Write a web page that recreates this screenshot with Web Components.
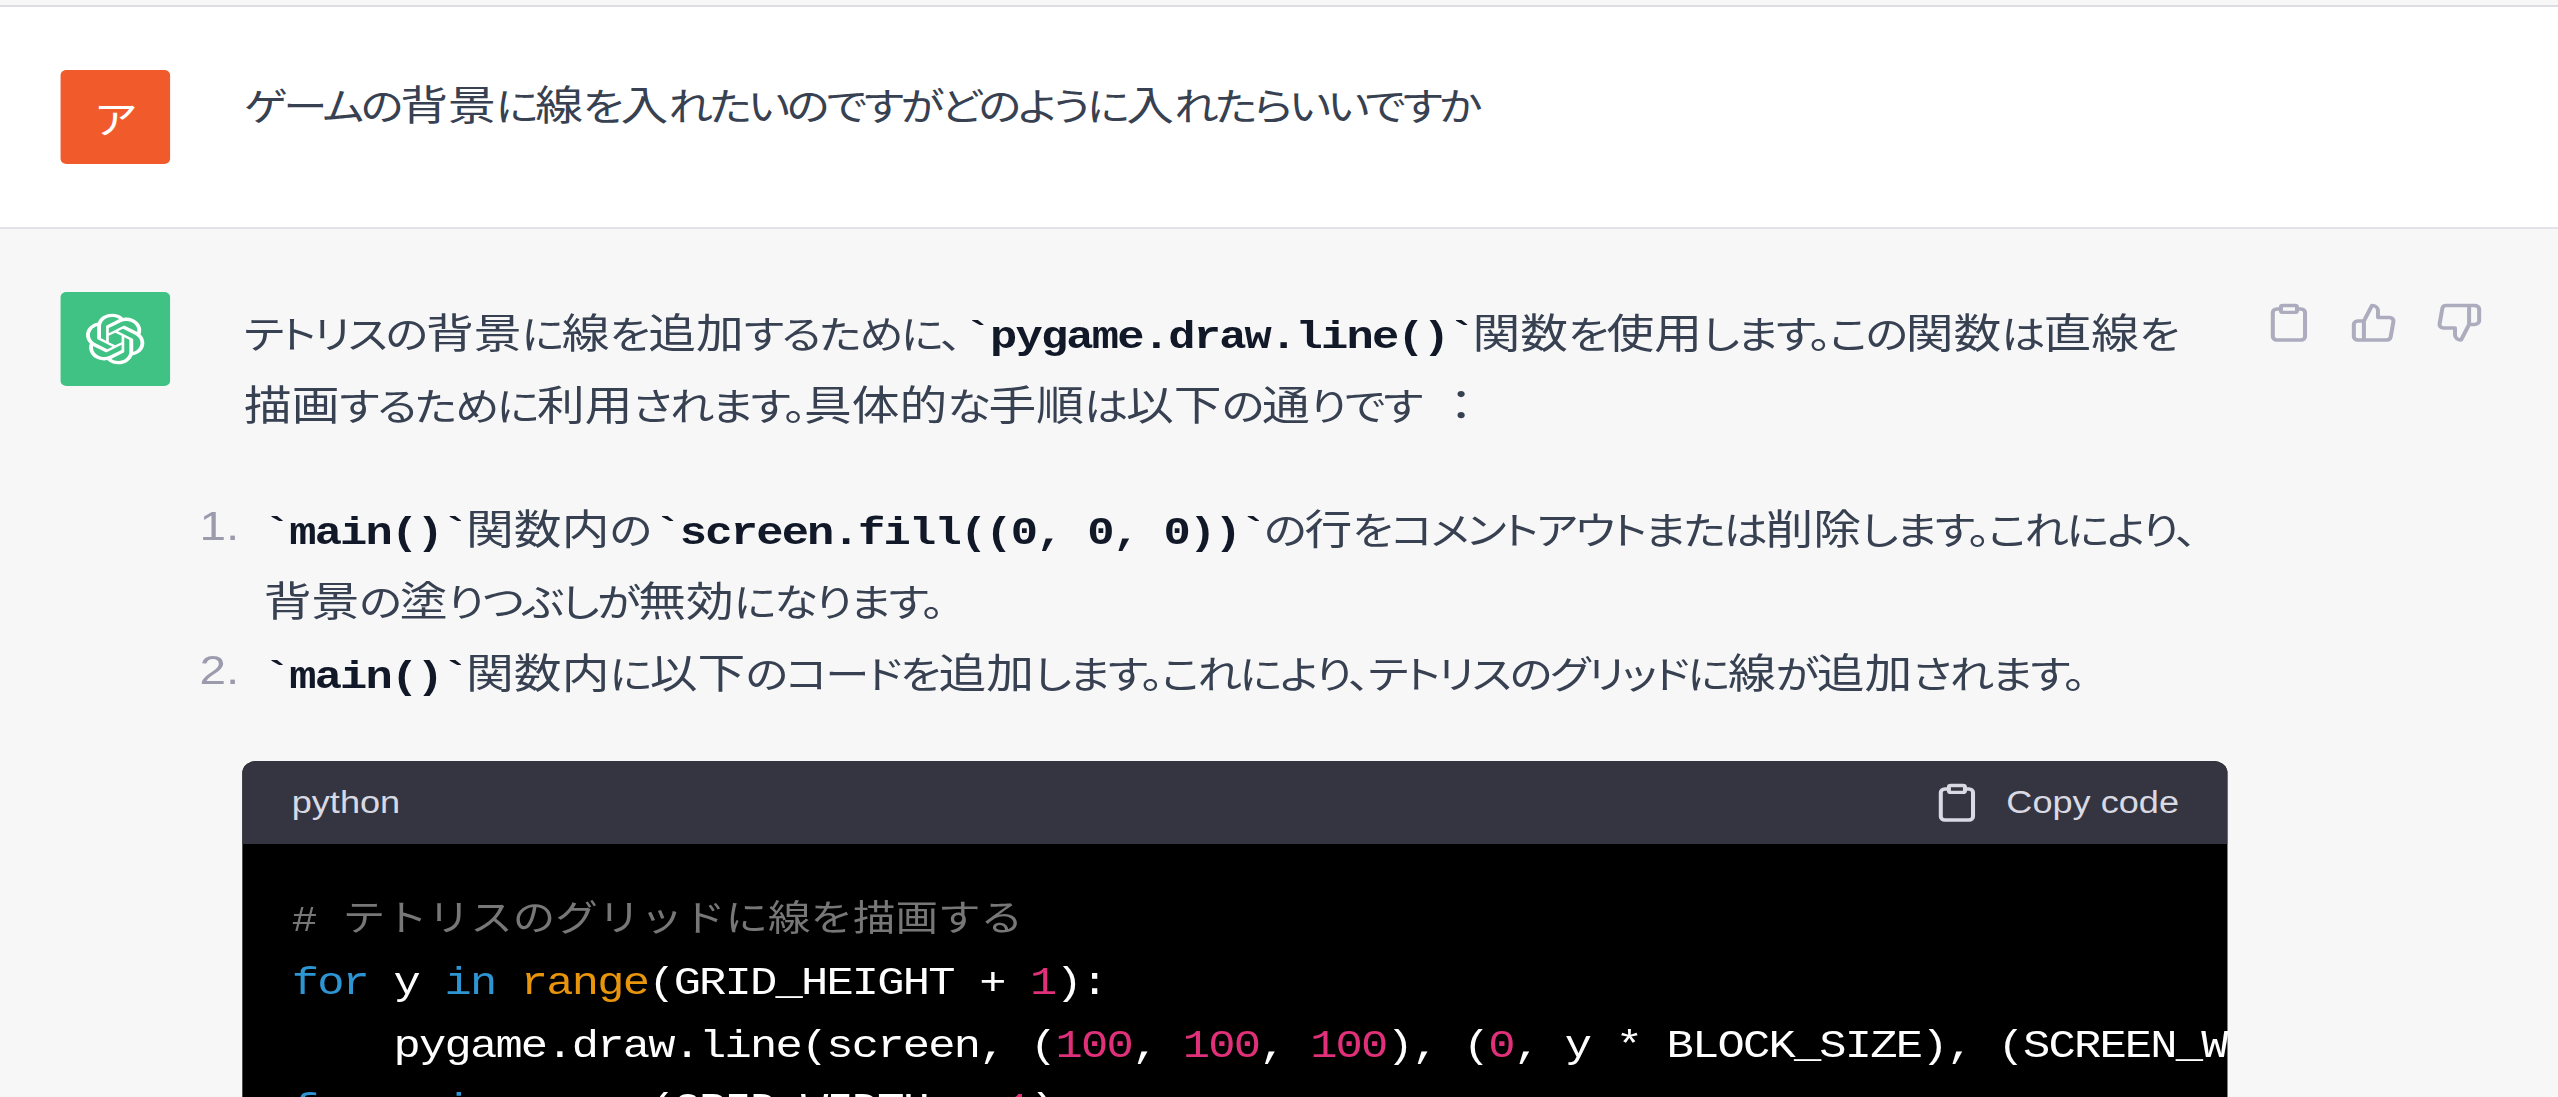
<!DOCTYPE html>
<html lang="ja">
<head>
<meta charset="utf-8">
<title>chat</title>
<style>
    html, body { margin: 0; height: 100%; overflow: hidden; background: #f7f7f8; }
    /* kana sit narrower than kanji in the shot */
    .kana { font-size: 38px; letter-spacing: -1.9px; line-height: 0; }
    chat-row[kind="user"] .kana { letter-spacing: -2.8px; }
    .full { font-feature-settings: normal; line-height: 0; padding-left: 14px; }
</style>
</head>
<body>
<chat-page>
<chat-row kind="user">
    <chat-avatar kind="user" slot="avatar">ア</chat-avatar>
    <div>ゲームの背景に線を入れたいのですがどのように入れたらいいですか</div>
</chat-row>
<chat-row kind="bot">
    <chat-avatar kind="bot" slot="avatar"></chat-avatar>
    <chat-actions slot="actions"></chat-actions>
    <chat-para>テトリスの背景に線を追加するために、<chat-code>`pygame.draw.line()`</chat-code>関数を使用します。この関数は直線を<br>描画するために利用されます。具体的な手順は以下の通りです<span class="full">：</span></chat-para>
    <chat-step num="1."><chat-code lead>`main()`</chat-code>関数内の<chat-code>`screen.fill((0, 0, 0))`</chat-code>の行をコメントアウトまたは削除します。これにより、<br>背景の塗りつぶしが無効になります。</chat-step>
    <chat-step num="2."><chat-code lead>`main()`</chat-code>関数内に以下のコードを追加します。これにより、テトリスのグリッドに線が追加されます。</chat-step>
    <code-block lang="python"><span class="c"># テトリスのグリッドに線を描画する</span>
<span class="k">for</span> y <span class="k">in</span> <span class="b">range</span>(GRID_HEIGHT + <span class="n">1</span>):
    pygame.draw.line(screen, (<span class="n">100</span>, <span class="n">100</span>, <span class="n">100</span>), (<span class="n">0</span>, y * BLOCK_SIZE), (SCREEN_W
<span class="k">for</span> x <span class="k">in</span> <span class="b">range</span>(GRID_WIDTH + <span class="n">1</span>):</code-block>
</chat-row>
</chat-page>

<script>
const ICON_ATTRS = 'viewBox="0 0 24 24" fill="none" stroke="currentColor" stroke-width="2" stroke-linecap="round" stroke-linejoin="round"';
const CLIPBOARD = `<svg ${ICON_ATTRS}>
    <path d="M16 4h2a2 2 0 0 1 2 2v14a2 2 0 0 1-2 2H6a2 2 0 0 1-2-2V6a2 2 0 0 1 2-2h2"/>
    <rect x="8" y="2" width="8" height="4" rx="1" ry="1"/>
</svg>`;

class ChatPage extends HTMLElement {
    constructor() {
        super();
        this.attachShadow({ mode: "open" }).innerHTML = `
        <style>
            :host {
                display: block;
                width: 2195.7px;
                height: 1097px;
                overflow: hidden;
                padding-top: 5px;
                box-sizing: border-box;
                transform: scaleX(1.165);
                transform-origin: 0 0;
                font-family: "Noto Sans CJK JP", "Liberation Sans", sans-serif;
                font-feature-settings: "palt";
                font-weight: 400;
                text-autospace: no-autospace;
                color: #374151;
            }
        </style>
        <slot></slot>
        `;
    }
}

class ChatRow extends HTMLElement {
    constructor() {
        super();
        this.shadowDOM = this.attachShadow({ mode: "open" });
    }

    connectedCallback() {
        const kind = this.getAttribute("kind");
        this.shadowDOM.innerHTML = `
        <style>
            :host {
                display: flex;
                align-items: flex-start;
                box-sizing: border-box;
                padding: 63px 0 0 52.4px;
                font-size: 41px;
                line-height: 72px;
            }
            :host([kind="user"]) {
                background: #fff;
                height: 224px;
                border-top: 2px solid #dcdde0;
                border-bottom: 2px solid #e2e3e6;
            }
            .body {
                width: 1704px;
                margin: ${kind === "bot" ? "2px" : "-4px"} 0 0 63px;
            }
            .side { margin-left: 31px; }
        </style>
        <slot name="avatar"></slot>
        <div class="body"><slot></slot></div>
        <div class="side"><slot name="actions"></slot></div>
        `;
    }
}

class ChatAvatar extends HTMLElement {
    constructor() {
        super();
        this.attachShadow({ mode: "open" });
    }

    connectedCallback() {
        const bot = this.getAttribute("kind") === "bot";
        this.shadowRoot.innerHTML = `
        <style>
            :host {
                display: flex;
                flex: none;
                align-items: center;
                justify-content: center;
                width: 94px;
                height: 94px;
                border-radius: 5px;
                color: #fff;
                font-size: 38px;
                line-height: 1;
                background: ${bot ? "#3fc283" : "#f15a2b"};
            }
            svg { width: 52px; height: 52px; }
        </style>
        ${bot ? `<svg viewBox="0 0 41 41" fill="currentColor">
            <path d="M37.5324 16.8707C37.9808 15.5241 38.1363 14.0974 37.9886 12.6859C37.8409 11.2744 37.3934 9.91076 36.676 8.68622C35.6126 6.83404 33.9882 5.3676 32.0373 4.4985C30.0864 3.62941 27.9098 3.40259 25.8215 3.85078C24.8796 2.7893 23.7219 1.94125 22.4257 1.36341C21.1295 0.785575 19.7249 0.491269 18.3058 0.500197C16.1708 0.495044 14.0893 1.16803 12.3614 2.42214C10.6335 3.67624 9.34853 5.44666 8.6917 7.47815C7.30085 7.76286 5.98686 8.3414 4.8377 9.17505C3.68854 10.0087 2.73073 11.0782 2.02839 12.312C0.956464 14.1591 0.498905 16.2988 0.721698 18.4228C0.944492 20.5467 1.83612 22.5449 3.268 24.1293C2.81966 25.4759 2.66413 26.9026 2.81182 28.3141C2.95951 29.7256 3.40701 31.0892 4.12437 32.3138C5.18791 34.1659 6.8123 35.6322 8.76321 36.5013C10.7141 37.3704 12.8907 37.5973 14.9789 37.1492C15.9208 38.2107 17.0786 39.0587 18.3747 39.6366C19.6709 40.2144 21.0755 40.5087 22.4946 40.4998C24.6307 40.5054 26.7133 39.8321 28.4418 38.5772C30.1704 37.3223 31.4556 35.5506 32.1119 33.5179C33.5027 33.2332 34.8167 32.6547 35.9659 31.821C37.115 30.9874 38.0728 29.9178 38.7752 28.684C39.8458 26.8371 40.3023 24.6979 40.0789 22.5748C39.8556 20.4517 38.9639 18.4544 37.5324 16.8707ZM22.4978 37.8849C20.7443 37.8874 19.0459 37.2733 17.6994 36.1501C17.7601 36.117 17.8666 36.0586 17.936 36.0161L25.9004 31.4156C26.1003 31.3019 26.2663 31.137 26.3813 30.9378C26.4964 30.7386 26.5563 30.5124 26.5549 30.2825V19.0542L29.9213 20.998C29.9389 21.0068 29.9541 21.0198 29.9656 21.0359C29.977 21.052 29.9842 21.0707 29.9867 21.0902V30.3889C29.9842 32.375 29.1946 34.2791 27.7909 35.6841C26.3872 37.0892 24.4838 37.8806 22.4978 37.8849ZM6.39227 31.0064C5.51397 29.4888 5.19742 27.7107 5.49804 25.9832C5.55718 26.0187 5.66048 26.0818 5.73461 26.1244L13.699 30.7248C13.8975 30.8408 14.1233 30.902 14.3532 30.902C14.583 30.902 14.8088 30.8408 15.0073 30.7248L24.731 25.1103V28.9979C24.7321 29.0177 24.7283 29.0376 24.7199 29.0556C24.7115 29.0736 24.6988 29.0893 24.6829 29.1012L16.6317 33.7497C14.9096 34.7416 12.8643 35.0097 10.9447 34.4954C9.02506 33.9811 7.38785 32.7263 6.39227 31.0064ZM4.29707 13.6194C5.17156 12.0998 6.55279 10.9364 8.19885 10.3327C8.19885 10.4013 8.19491 10.5228 8.19491 10.6071V19.808C8.19351 20.0378 8.25334 20.2638 8.36823 20.4629C8.48312 20.6619 8.64893 20.8267 8.84863 20.9404L18.5723 26.5542L15.206 28.4979C15.1894 28.5089 15.1703 28.5155 15.1505 28.5173C15.1307 28.5191 15.1107 28.516 15.0924 28.5082L7.04046 23.8557C5.32135 22.8601 4.06716 21.2235 3.55289 19.3046C3.03862 17.3858 3.30624 15.3413 4.29707 13.6194ZM31.955 20.0556L22.2312 14.4411L25.5976 12.4981C25.6142 12.4872 25.6333 12.4805 25.6531 12.4787C25.6729 12.4769 25.6928 12.4801 25.7111 12.4879L33.7631 17.1364C34.9967 17.849 36.0017 18.8982 36.6606 20.1613C37.3194 21.4244 37.6047 22.849 37.4832 24.2684C37.3617 25.6878 36.8382 27.0432 35.9743 28.1759C35.1103 29.3086 33.9415 30.1717 32.6047 30.6641C32.6047 30.5947 32.6047 30.4733 32.6047 30.3889V21.188C32.6066 20.9586 32.5474 20.7328 32.4332 20.5338C32.319 20.3348 32.154 20.1698 31.955 20.0556ZM35.3055 15.0128C35.2464 14.9765 35.1431 14.9142 35.069 14.8717L27.1045 10.2712C26.906 10.1554 26.6803 10.0943 26.4504 10.0943C26.2206 10.0943 25.9948 10.1554 25.7963 10.2712L16.0726 15.8858V11.9982C16.0715 11.9783 16.0753 11.9585 16.0837 11.9405C16.0921 11.9225 16.1048 11.9068 16.1207 11.8949L24.1719 7.25025C25.4053 6.53903 26.8158 6.19376 28.2383 6.25482C29.6608 6.31589 31.0364 6.78077 32.2044 7.59508C33.3723 8.40939 34.2842 9.53945 34.8334 10.8531C35.3826 12.1667 35.5464 13.6095 35.3055 15.0128ZM14.2424 21.9419L10.8752 19.9981C10.8576 19.9893 10.8423 19.9763 10.8309 19.9602C10.8195 19.9441 10.8122 19.9254 10.8098 19.9058V10.6071C10.8107 9.18295 11.2173 7.78848 11.9819 6.58696C12.7466 5.38544 13.8377 4.42659 15.1275 3.82264C16.4173 3.21869 17.8524 2.99464 19.2649 3.1767C20.6775 3.35876 22.0089 3.93941 23.1034 4.85067C23.0427 4.88379 22.937 4.94215 22.8668 4.98473L14.9024 9.58517C14.7025 9.69878 14.5366 9.86356 14.4215 10.0626C14.3065 10.2616 14.2466 10.4877 14.2479 10.7175L14.2424 21.9419ZM16.071 17.9991L20.4018 15.4978L24.7325 17.9975V22.9985L20.4018 25.4983L16.071 22.9985V17.9991Z"/>
        </svg>` : "<slot></slot>"}
        `;
    }
}

class ChatActions extends HTMLElement {
    constructor() {
        super();
        this.attachShadow({ mode: "open" }).innerHTML = `
        <style>
            :host {
                display: flex;
                gap: 31.5px;
                margin-top: 9.6px;
                color: #acacbe;
            }
            svg { width: 41.5px; height: 41.5px; display: block; }
        </style>
        ${CLIPBOARD}
        <svg ${ICON_ATTRS}>
            <path d="M14 9V5a3 3 0 0 0-3-3l-4 9v11h11.28a2 2 0 0 0 2-1.7l1.38-9a2 2 0 0 0-2-2.3zM7 22H4a2 2 0 0 1-2-2v-7a2 2 0 0 1 2-2h3"/>
        </svg>
        <svg ${ICON_ATTRS}>
            <path d="M10 15v4a3 3 0 0 0 3 3l4-9V2H5.72a2 2 0 0 0-2 1.7l-1.38 9a2 2 0 0 0 2 2.3zm7-13h2.67A2.31 2.31 0 0 1 22 4v7a2.31 2.31 0 0 1-2.33 2H17"/>
        </svg>
        `;
    }
}

class ChatPara extends HTMLElement {
    constructor() {
        super();
        this.attachShadow({ mode: "open" }).innerHTML = `
        <style>
            :host { display: block; margin-bottom: 52px; white-space: nowrap; }
        </style>
        <slot></slot>
        `;
    }
}

class ChatCode extends HTMLElement {
    constructor() {
        super();
        this.attachShadow({ mode: "open" }).innerHTML = `
        <style>
            :host {
                font-family: "Liberation Mono", monospace;
                font-feature-settings: normal;
                font-weight: 700;
                font-size: 39px;
                letter-spacing: -1.55px;
                line-height: 0;
                color: #111827;
                margin: 0 -23px 0 -18px;
            }
            :host([lead]) { margin-left: 0; }
        </style>
        <slot></slot>
        `;
    }
}

class ChatStep extends HTMLElement {
    constructor() {
        super();
        this.attachShadow({ mode: "open" }).innerHTML = `
        <style>
            :host { display: block; position: relative; padding-left: 17px; white-space: nowrap; }
            .num {
                position: absolute;
                right: 100%;
                margin-right: 4px;
                color: #9b9bad;
                font-family: "Liberation Sans", sans-serif;
                font-weight: 400;
                font-size: 41px;
            }
        </style>
        <span class="num"></span><slot></slot>
        `;
        this.shadowRoot.querySelector(".num").textContent = this.getAttribute("num");
    }
}

class CodeBlock extends HTMLElement {
    constructor() {
        super();
        this.attachShadow({ mode: "open" });
    }

    connectedCallback() {
        this.shadowRoot.innerHTML = `
        <style>
            :host {
                display: block;
                width: 1704px;
                margin: 55px 0 0 -1px;
                border-radius: 12px 12px 0 0;
                overflow: hidden;
                background: #000;
            }
            .head {
                display: flex;
                justify-content: space-between;
                align-items: center;
                height: 83px;
                padding: 0 42px;
                background: #343541;
                color: #d9d9e3;
                font-family: "Liberation Sans", sans-serif;
                font-weight: 400;
                font-size: 31px;
            }
            .copy { display: flex; align-items: center; gap: 22px; }
            .copy svg { width: 41.5px; height: 41.5px; display: block; }
            pre {
                margin: 0;
                padding: 46px 42px;
                color: #fff;
                font-family: "Liberation Mono", "Noto Sans CJK JP", monospace;
                font-feature-settings: normal;
                font-weight: 400;
                font-size: 39px;
                letter-spacing: -1.55px;
                line-height: 63px;
                overflow: hidden;
            }
            ::slotted(.c) { color: #777; font-size: 36.5px; letter-spacing: 0; }
            ::slotted(.k) { color: #2e95d3; }
            ::slotted(.b) { color: #e9950c; }
            ::slotted(.n) { color: #df3079; }
        </style>
        <div class="head">
            <span>${this.getAttribute("lang")}</span>
            <span class="copy">
                ${CLIPBOARD}
                <span>Copy code</span>
            </span>
        </div>
        <pre><slot></slot></pre>
        `;
    }
}

function wrapKana(root) {
    const walker = document.createTreeWalker(root, NodeFilter.SHOW_TEXT);
    const nodes = [];
    while (walker.nextNode()) {
        if (!walker.currentNode.parentElement.closest("chat-avatar, chat-code, code-block")) {
            nodes.push(walker.currentNode);
        }
    }
    nodes.forEach((node) => {
        const html = node.textContent.replace(/[\u3001\u3002\u3040-\u30ff]+/g, '<span class="kana">$&</span>');
        const box = document.createElement("template");
        box.innerHTML = html;
        node.replaceWith(box.content);
    });
}

wrapKana(document.querySelector("chat-page"));

customElements.define("chat-page", ChatPage);
customElements.define("chat-row", ChatRow);
customElements.define("chat-avatar", ChatAvatar);
customElements.define("chat-actions", ChatActions);
customElements.define("chat-para", ChatPara);
customElements.define("chat-code", ChatCode);
customElements.define("chat-step", ChatStep);
customElements.define("code-block", CodeBlock);
</script>
</body>
</html>
